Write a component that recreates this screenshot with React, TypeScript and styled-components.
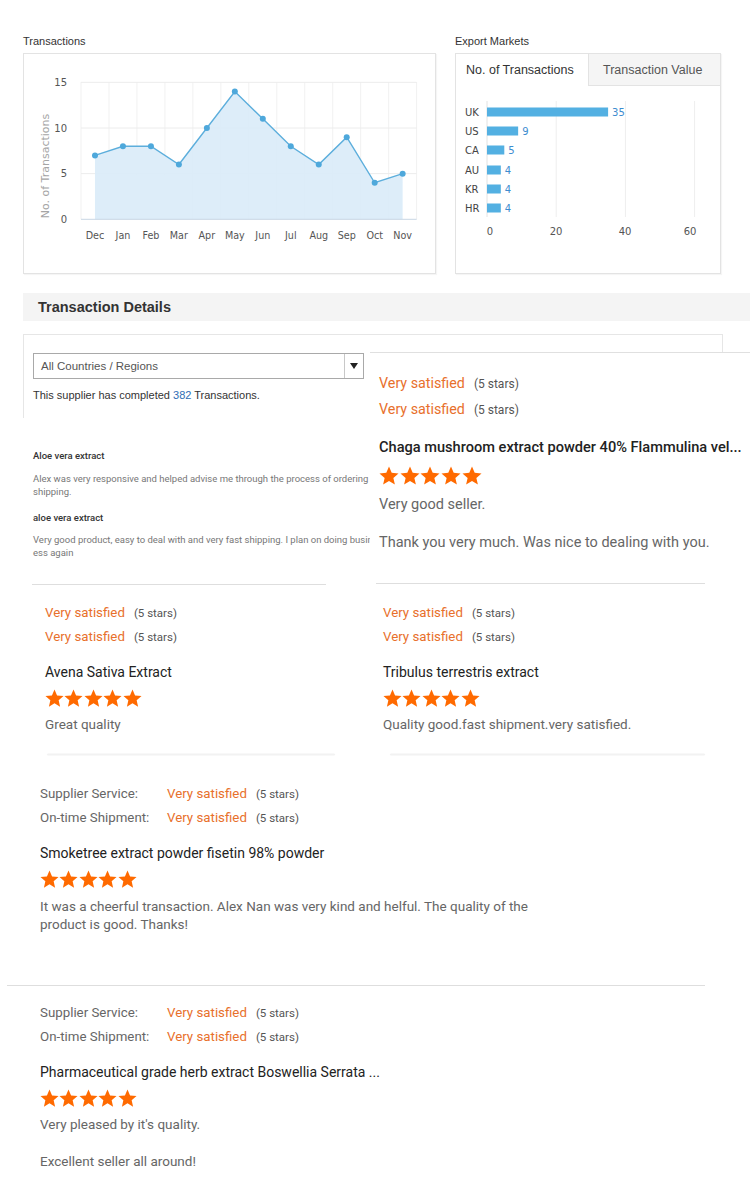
import React from "react";
import styled, { createGlobalStyle } from "styled-components";

const GlobalStyle = createGlobalStyle`
  html, body { margin: 0; padding: 0; background: #fff; }
  body { font-family: Roboto, "Liberation Sans", Arial, sans-serif; color: #333; }
  * { box-sizing: border-box; }
`;

type Variant = "lg" | "md";

const V = {
  lg: { rowLH: 26, rowFont: 14.3, starsFont: 12, titleFont: 14.6, titleWeight: 500, titleMT: 14.7, starsMT: 9.5, star: 20, starGap: 0.7, commentFont: 14.5, commentLH: 20, commentMT: 9, paraGap: 18 },
  md: { rowLH: 24, rowFont: 13.3, starsFont: 11.5, titleFont: 14, titleWeight: 400, titleMT: 13, starsMT: 7, star: 19, starGap: 0.4, commentFont: 13.5, commentLH: 18, commentMT: 7.5, paraGap: 19 },
};

const Page = styled.div`
  width: 750px;
  height: 1186px;
  padding-top: 34px;
  overflow: hidden;
  background: #fff;
`;

const TopRow = styled.div`
  display: flex;
  gap: 19px;
  padding-left: 23px;
`;

const Panel = styled.section<{ $w: number }>`
  width: ${(p) => p.$w}px;
  display: flex;
  flex-direction: column;
`;

const PanelLabel = styled.div`
  font-family: "Liberation Sans", Arial, sans-serif;
  font-size: 11px;
  line-height: 14px;
  color: #333;
  margin-bottom: 5px;
`;

const ChartBox = styled.div`
  height: 221px;
  border: 1px solid #e3e3e3;
  box-shadow: 1px 1px 1px rgba(0, 0, 0, 0.04);
  background: #fff;
  display: flex;
  flex-direction: column;
`;

const Tabs = styled.div`
  display: flex;
  height: 32px;
`;

const Tab = styled.div<{ $active?: boolean }>`
  width: 132px;
  height: 32px;
  display: flex;
  align-items: center;
  font-family: "Liberation Sans", Arial, sans-serif;
  font-size: 12.5px;
  padding-left: ${(p) => (p.$active ? 10 : 14)}px;
  color: ${(p) => (p.$active ? "#333" : "#555")};
  background: ${(p) => (p.$active ? "#fff" : "#f5f5f5")};
  border-left: ${(p) => (p.$active ? "none" : "1px solid #e3e3e3")};
  border-bottom: ${(p) => (p.$active ? "none" : "1px solid #e3e3e3")};
`;

const SectionBar = styled.div`
  margin: 19px 0 0 23px;
  height: 28px;
  background: #f4f4f4;
  padding-left: 15px;
  display: flex;
  align-items: center;
  font-family: "Liberation Sans", Arial, sans-serif;
  font-weight: 700;
  font-size: 14.5px;
  color: #333;
`;

const DetailsArea = styled.div`
  position: relative;
  margin: 13px 0 0 23px;
  width: 727px;
`;

const FilterBox = styled.div`
  width: 700px;
  height: 84px;
  border: 1px solid #e6e6e6;
  border-bottom: none;
  padding: 18px 0 0 9px;
`;

const Dropdown = styled.div`
  width: 331px;
  height: 26px;
  border: 1px solid #a9a9a9;
  display: flex;
`;

const DropText = styled.div`
  flex: 1;
  padding-left: 7px;
  font-family: "Liberation Sans", Arial, sans-serif;
  font-size: 11.5px;
  line-height: 24px;
  color: #555;
`;

const DropArrow = styled.div`
  width: 19px;
  border-left: 1px solid #c8c8c8;
  display: flex;
  align-items: center;
  justify-content: center;
  &::before {
    content: "";
    border-left: 4px solid transparent;
    border-right: 4px solid transparent;
    border-top: 6px solid #222;
  }
`;

const Summary = styled.div`
  margin-top: 9px;
  font-family: "Liberation Sans", Arial, sans-serif;
  font-size: 11px;
  line-height: 14px;
  color: #333;
`;

const Count = styled.span`
  color: #2f6db5;
`;

const Snippet = styled.div`
  width: 345px;
  margin-left: 9px;
  padding: 31px 0 0 1px;
`;

const SnippetTitle = styled.div<{ $mt?: number }>`
  font-family: Roboto, Arial, sans-serif;
  font-size: 9.5px;
  font-weight: 500;
  line-height: 13px;
  color: #333;
  margin-top: ${(p) => p.$mt ?? 0}px;
`;

const SnippetText = styled.div`
  font-family: Roboto, Arial, sans-serif;
  font-size: 9.5px;
  line-height: 13px;
  color: #777;
  margin-top: 9.5px;
  word-break: break-all;
`;

const Divider = styled.div<{ $w: number; $ml?: number; $mt?: number }>`
  width: ${(p) => p.$w}px;
  height: 1px;
  background: #dedede;
  margin-left: ${(p) => p.$ml ?? 0}px;
  margin-top: ${(p) => p.$mt ?? 0}px;
`;

const FaintLine = styled.div<{ $w: number; $ml: number }>`
  width: ${(p) => p.$w}px;
  height: 3px;
  margin: 20px 0 0 ${(p) => p.$ml}px;
  background: linear-gradient(#fbfbfb, #f2f2f2, #fbfbfb);
  border-radius: 2px;
`;

const Overlay = styled.div`
  position: absolute;
  top: 18px;
  left: 347px;
  width: 380px;
  height: 234px;
  background: #fff;
  border-top: 1px solid #e0e0e0;
  padding: 17px 0 0 9px;
`;

const MiddleRow = styled.div`
  display: flex;
  gap: 41px;
  margin-left: 32px;
`;

const Column = styled.div<{ $w: number; $pl: number }>`
  width: ${(p) => p.$w}px;
  padding: 16px 0 0 ${(p) => p.$pl}px;
`;

const BottomReview = styled.div<{ $pt: number }>`
  padding: ${(p) => p.$pt}px 0 0 40px;
`;

/* review parts */
const RatingRow = styled.div<{ $v: Variant }>`
  display: flex;
  align-items: baseline;
  line-height: ${(p) => V[p.$v].rowLH}px;
  height: ${(p) => V[p.$v].rowLH}px;
  white-space: nowrap;
`;

const RatingLabel = styled.span<{ $v: Variant }>`
  width: 127px;
  font-size: ${(p) => V[p.$v].rowFont}px;
  color: #666;
`;

const RatingValue = styled.span<{ $v: Variant }>`
  font-size: ${(p) => V[p.$v].rowFont}px;
  color: #e8702c;
`;

const RatingStars = styled.span<{ $v: Variant }>`
  margin-left: 9px;
  font-size: ${(p) => V[p.$v].starsFont}px;
  color: #555;
`;

const ReviewTitle = styled.div<{ $v: Variant }>`
  margin-top: ${(p) => V[p.$v].titleMT}px;
  font-size: ${(p) => V[p.$v].titleFont}px;
  line-height: 20px;
  font-weight: ${(p) => V[p.$v].titleWeight};
  color: #222;
  white-space: nowrap;
`;

const StarRow = styled.div<{ $v: Variant }>`
  display: flex;
  gap: ${(p) => V[p.$v].starGap}px;
  margin-top: ${(p) => V[p.$v].starsMT}px;
  height: ${(p) => V[p.$v].star}px;
`;

const Comment = styled.p<{ $v: Variant; $first: boolean; $w?: number }>`
  margin: ${(p) => (p.$first ? V[p.$v].commentMT : V[p.$v].paraGap)}px 0 0 0;
  font-size: ${(p) => V[p.$v].commentFont}px;
  line-height: ${(p) => V[p.$v].commentLH}px;
  color: #666;
  max-width: ${(p) => (p.$w ? `${p.$w}px` : "none")};
`;

const Star: React.FC<{ size: number }> = ({ size }) => (
  <svg width={size} height={size} viewBox="0 0 20 20">
    <polygon
      points="10,0.5 12.7,6.78 19.51,7.41 14.37,11.92 15.88,18.59 10,15.1 4.12,18.59 5.63,11.92 0.49,7.41 7.3,6.78"
      fill="#ff6a00"
    />
  </svg>
);

type ReviewProps = {
  v: Variant;
  labels?: boolean;
  title: string;
  comments: string[];
  commentWidth?: number;
};

const Review: React.FC<ReviewProps> = ({ v, labels, title, comments, commentWidth }) => (
  <>
    {["Supplier Service:", "On-time Shipment:"].map((l) => (
      <RatingRow $v={v} key={l}>
        {labels && <RatingLabel $v={v}>{l}</RatingLabel>}
        <RatingValue $v={v}>Very satisfied</RatingValue>
        <RatingStars $v={v}>(5 stars)</RatingStars>
      </RatingRow>
    ))}
    <ReviewTitle $v={v}>{title}</ReviewTitle>
    <StarRow $v={v}>
      {[0, 1, 2, 3, 4].map((i) => (
        <Star key={i} size={V[v].star} />
      ))}
    </StarRow>
    {comments.map((c, i) => (
      <Comment $v={v} $first={i === 0} $w={commentWidth} key={i}>
        {c}
      </Comment>
    ))}
  </>
);

/* charts */
const months = ["Dec", "Jan", "Feb", "Mar", "Apr", "May", "Jun", "Jul", "Aug", "Sep", "Oct", "Nov"];
const values = [7, 8, 8, 6, 10, 14, 11, 8, 6, 9, 4, 5];

const LineChart: React.FC = () => {
  const left = 57;
  const cw = 27.97;
  const y0 = 165.3;
  const unit = 9.13;
  const right = left + cw * 12;
  const pts = values.map((v, i) => [left + cw * (i + 0.5), y0 - v * unit]);
  const line = pts.map((p) => p.join(",")).join(" ");
  const area = `${pts[0][0]},${y0} ${line} ${pts[11][0]},${y0}`;
  return (
    <svg width="411" height="219" viewBox="0 0 411 219">
      {Array.from({ length: 13 }, (_, k) => (
        <line key={k} x1={left + cw * k} x2={left + cw * k} y1={28} y2={y0} stroke="#f1f1f1" strokeWidth="1" />
      ))}
      {[5, 10, 15].map((t) => (
        <line key={t} x1={left} x2={right} y1={y0 - t * unit} y2={y0 - t * unit} stroke="#ececec" strokeWidth="1" />
      ))}
      <polygon points={area} fill="#d9ebf8" opacity="0.9" />
      <polyline points={line} fill="none" stroke="#5caedc" strokeWidth="1.4" />
      {pts.map((p, i) => (
        <circle key={i} cx={p[0]} cy={p[1]} r="3" fill="#4ea8db" />
      ))}
      <line x1={left} x2={right} y1={y0} y2={y0} stroke="#c9d6e4" strokeWidth="1" />
      {[0, 5, 10, 15].map((t) => (
        <text key={t} x={43} y={y0 - t * unit + 3.6} textAnchor="end" fontFamily="DejaVu Sans, Verdana, sans-serif" fontSize="10" fill="#555">
          {t}
        </text>
      ))}
      {months.map((m, i) => (
        <text key={m} x={left + cw * (i + 0.5)} y={184.5} textAnchor="middle" fontFamily="DejaVu Sans, Verdana, sans-serif" fontSize="9.6" fill="#555">
          {m}
        </text>
      ))}
      <text
        transform="translate(24.5,112) rotate(-90)"
        textAnchor="middle"
        fontFamily="DejaVu Sans, Verdana, sans-serif"
        fontSize="11"
        fill="#a5a5a5"
      >
        No. of Transactions
      </text>
    </svg>
  );
};

const markets: [string, number][] = [
  ["UK", 35],
  ["US", 9],
  ["CA", 5],
  ["AU", 4],
  ["KR", 4],
  ["HR", 4],
];

const BarChart: React.FC = () => {
  const x0 = 31;
  const unit = 3.46;
  const ys = [26, 45, 64, 84, 103, 122];
  return (
    <svg width="264" height="186" viewBox="0 0 264 186">
      {[20, 40, 60].map((t) => (
        <line key={t} x1={x0 + t * unit} x2={x0 + t * unit} y1={15} y2={131} stroke="#eeeeee" strokeWidth="1" />
      ))}
      <line x1={x0} x2={x0} y1={15} y2={131} stroke="#e2e2e2" strokeWidth="1" />
      {markets.map(([c, v], i) => (
        <g key={c}>
          <text x={9} y={ys[i] + 3.6} fontFamily="DejaVu Sans, Verdana, sans-serif" fontSize="10" fill="#444">
            {c}
          </text>
          <rect x={x0} y={ys[i] - 4.5} width={v * unit} height={9} fill="#53b0e2" />
          <text x={x0 + v * unit + 4} y={ys[i] + 3.8} fontFamily="DejaVu Sans, Verdana, sans-serif" fontSize="10" fill="#3d8ccf">
            {v}
          </text>
        </g>
      ))}
      {[
        [0, 34],
        [20, 100],
        [40, 169],
        [60, 234],
      ].map(([t, x]) => (
        <text key={t} x={x} y={149} textAnchor="middle" fontFamily="DejaVu Sans, Verdana, sans-serif" fontSize="10" fill="#555">
          {t}
        </text>
      ))}
    </svg>
  );
};

export default function App() {
  return (
    <Page>
      <GlobalStyle />
      <TopRow>
        <Panel $w={413}>
          <PanelLabel>Transactions</PanelLabel>
          <ChartBox>
            <LineChart />
          </ChartBox>
        </Panel>
        <Panel $w={266}>
          <PanelLabel>Export Markets</PanelLabel>
          <ChartBox>
            <Tabs>
              <Tab $active>No. of Transactions</Tab>
              <Tab>Transaction Value</Tab>
            </Tabs>
            <BarChart />
          </ChartBox>
        </Panel>
      </TopRow>

      <SectionBar>Transaction Details</SectionBar>

      <DetailsArea>
        <FilterBox>
          <Dropdown>
            <DropText>All Countries / Regions</DropText>
            <DropArrow />
          </Dropdown>
          <Summary>
            This supplier has completed <Count>382</Count> Transactions.
          </Summary>
        </FilterBox>
        <Snippet>
          <SnippetTitle>Aloe vera extract</SnippetTitle>
          <SnippetText>Alex was very responsive and helped advise me through the process of ordering &amp; shipping.</SnippetText>
          <SnippetTitle $mt={13}>aloe vera extract</SnippetTitle>
          <SnippetText>Very good product, easy to deal with and very fast shipping. I plan on doing business again</SnippetText>
          <Divider $w={294} $mt={24.5} $ml={-1} />
        </Snippet>
        <Overlay>
          <Review
            v="lg"
            title="Chaga mushroom extract powder 40% Flammulina vel..."
            comments={["Very good seller.", "Thank you very much. Was nice to dealing with you."]}
          />
          <Divider $w={329} $ml={-3} $mt={30} />
        </Overlay>
      </DetailsArea>

      <MiddleRow>
        <Column $w={303} $pl={13}>
          <Review v="md" title="Avena Sativa Extract" comments={["Great quality"]} />
          <FaintLine $w={288} $ml={2} />
        </Column>
        <Column $w={330} $pl={7}>
          <Review v="md" title="Tribulus terrestris extract" comments={["Quality good.fast shipment.very satisfied."]} />
          <FaintLine $w={315} $ml={7} />
        </Column>
      </MiddleRow>

      <BottomReview $pt={26}>
        <Review
          v="md"
          labels
          title="Smoketree extract powder fisetin 98% powder"
          commentWidth={510}
          comments={["It was a cheerful transaction. Alex Nan was very kind and helful. The quality of the product is good. Thanks!"]}
        />
      </BottomReview>
      <Divider $w={698} $ml={7} $mt={52} />
      <BottomReview $pt={15}>
        <Review
          v="md"
          labels
          title="Pharmaceutical grade herb extract Boswellia Serrata ..."
          comments={["Very pleased by it's quality.", "Excellent seller all around!"]}
        />
      </BottomReview>
    </Page>
  );
}
